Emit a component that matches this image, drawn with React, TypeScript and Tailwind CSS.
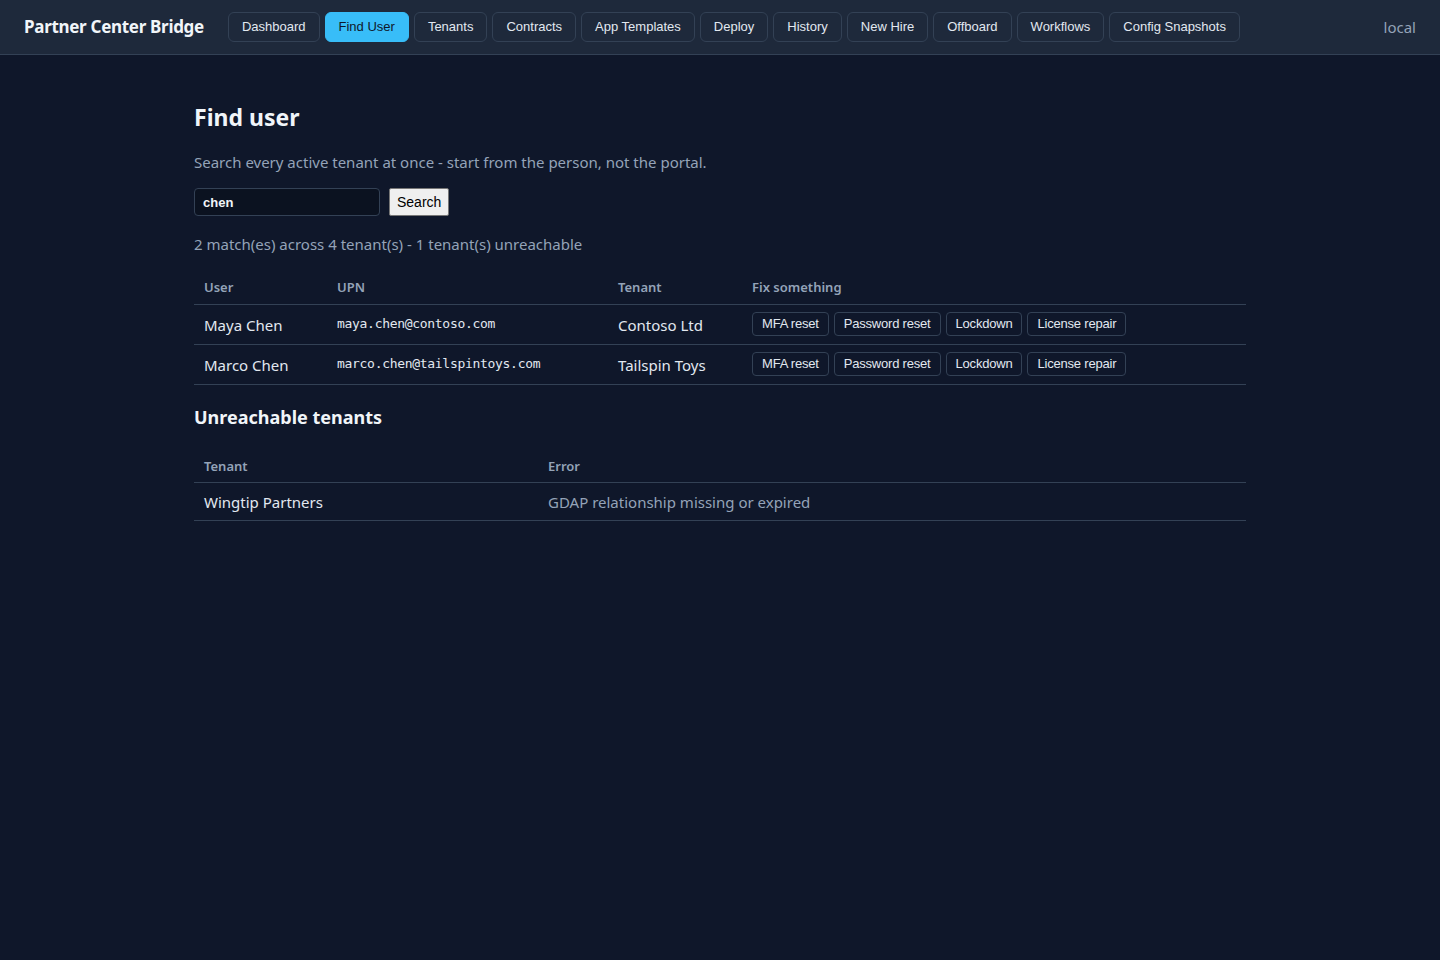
import React from 'react';

const NAV = [
  'Dashboard',
  'Find User',
  'Tenants',
  'Contracts',
  'App Templates',
  'Deploy',
  'History',
  'New Hire',
  'Offboard',
  'Workflows',
  'Config Snapshots',
];

const MATCHES = [
  { name: 'Maya Chen', upn: 'maya.chen@contoso.com', tenant: 'Contoso Ltd' },
  { name: 'Marco Chen', upn: 'marco.chen@tailspintoys.com', tenant: 'Tailspin Toys' },
];

const FIXES = ['MFA reset', 'Password reset', 'Lockdown', 'License repair'];

const sans = "font-['Noto_Sans',sans-serif]";
const arial = "font-['Liberation_Sans',Arial,sans-serif]";

export default function App() {
  return (
    <div className={`min-h-screen bg-[#0f172a] text-[#e2e8f0] ${sans}`}>
      {/* Top bar */}
      <header className="h-[55px] bg-[#1e293b] border-b border-[#334155] flex items-center px-6">
        <div className="text-[17px] font-bold text-[#f1f5f9] mr-6 tracking-[-0.3px]">Partner Center Bridge</div>
        <nav className="flex items-center gap-[5px]">
          {NAV.map((item) => (
            <button
              key={item}
              className={
                item === 'Find User'
                  ? `h-[30px] px-[13px] rounded-[6px] border border-[#38bdf8] bg-[#38bdf8] text-[#0f172a] text-[13px] ${arial}`
                  : `h-[30px] px-[13px] rounded-[6px] border border-[#334155] bg-[#1e293b] text-[#e2e8f0] text-[13px] ${arial}`
              }
            >
              {item}
            </button>
          ))}
        </nav>
        <div className="ml-auto text-[15px] text-[#94a3b8]">local</div>
      </header>

      <main className="max-w-[1100px] mx-auto px-6 pt-[47px]">
        <h1 className="text-[23px] font-bold text-[#f1f5f9] leading-[30px]">Find user</h1>
        <p className="mt-[19px] text-[15px] text-[#94a3b8] leading-[22px]">
          Search every active tenant at once - start from the person, not the portal.
        </p>

        <div className="mt-[15px] flex items-center gap-[9px]">
          <input
            defaultValue="chen"
            className={`w-[186px] h-[28px] px-[8px] rounded-[4px] border border-[#334155] bg-[#0b1220] text-[13px] font-semibold text-[#f1f5f9] outline-none ${arial}`}
          />
          <button
            className={`h-[28px] px-[7px] rounded-[2px] border border-[#767676] bg-[#efefef] text-[14px] text-black ${arial}`}
          >
            Search
          </button>
        </div>

        <p className="mt-[16px] text-[15px] text-[#94a3b8] leading-[24px]">
          2 match(es) across 4 tenant(s) - 1 tenant(s) unreachable
        </p>

        <table className="mt-[16px] w-full border-collapse text-left">
          <thead>
            <tr className="border-b border-[#334155]">
              <th className="w-[133px] px-[10px] h-[32px] text-[13px] font-semibold text-[#94a3b8]">User</th>
              <th className="w-[281px] px-[10px] h-[32px] text-[13px] font-semibold text-[#94a3b8]">UPN</th>
              <th className="w-[134px] px-[10px] h-[32px] text-[13px] font-semibold text-[#94a3b8]">Tenant</th>
              <th className="px-[10px] h-[32px] text-[13px] font-semibold text-[#94a3b8]">Fix something</th>
            </tr>
          </thead>
          <tbody>
            {MATCHES.map((m) => (
              <tr key={m.upn} className="border-b border-[#334155]">
                <td className="px-[10px] h-[40px] pt-[3px] text-[15px] text-[#e2e8f0]">{m.name}</td>
                <td className="px-[10px] h-[40px] text-[13px] text-[#e2e8f0] font-['DejaVu_Sans_Mono',monospace] tracking-[-0.3px]">
                  {m.upn}
                </td>
                <td className="px-[10px] h-[40px] pt-[3px] text-[15px] text-[#e2e8f0]">{m.tenant}</td>
                <td className="px-[10px] h-[40px]">
                  <div className="flex items-center gap-[5px]">
                    {FIXES.map((f) => (
                      <button
                        key={f}
                        className={`h-[24px] px-[9px] rounded-[4px] border border-[#334155] bg-[#0f172a] text-[13px] text-[#e2e8f0] tracking-[-0.2px] ${arial}`}
                      >
                        {f}
                      </button>
                    ))}
                  </div>
                </td>
              </tr>
            ))}
          </tbody>
        </table>

        <h2 className="mt-[20px] text-[18px] font-bold text-[#f1f5f9] leading-[24px]">Unreachable tenants</h2>

        <table className="mt-[22px] w-full border-collapse text-left">
          <thead>
            <tr className="border-b border-[#334155]">
              <th className="w-[344px] px-[10px] h-[32px] text-[13px] font-semibold text-[#94a3b8]">Tenant</th>
              <th className="px-[10px] h-[32px] text-[13px] font-semibold text-[#94a3b8]">Error</th>
            </tr>
          </thead>
          <tbody>
            <tr className="border-b border-[#334155]">
              <td className="px-[10px] h-[38px] pt-[2px] text-[15px] text-[#e2e8f0]">Wingtip Partners</td>
              <td className="px-[10px] h-[38px] pt-[2px] text-[15px] text-[#94a3b8]">GDAP relationship missing or expired</td>
            </tr>
          </tbody>
        </table>
      </main>
    </div>
  );
}
